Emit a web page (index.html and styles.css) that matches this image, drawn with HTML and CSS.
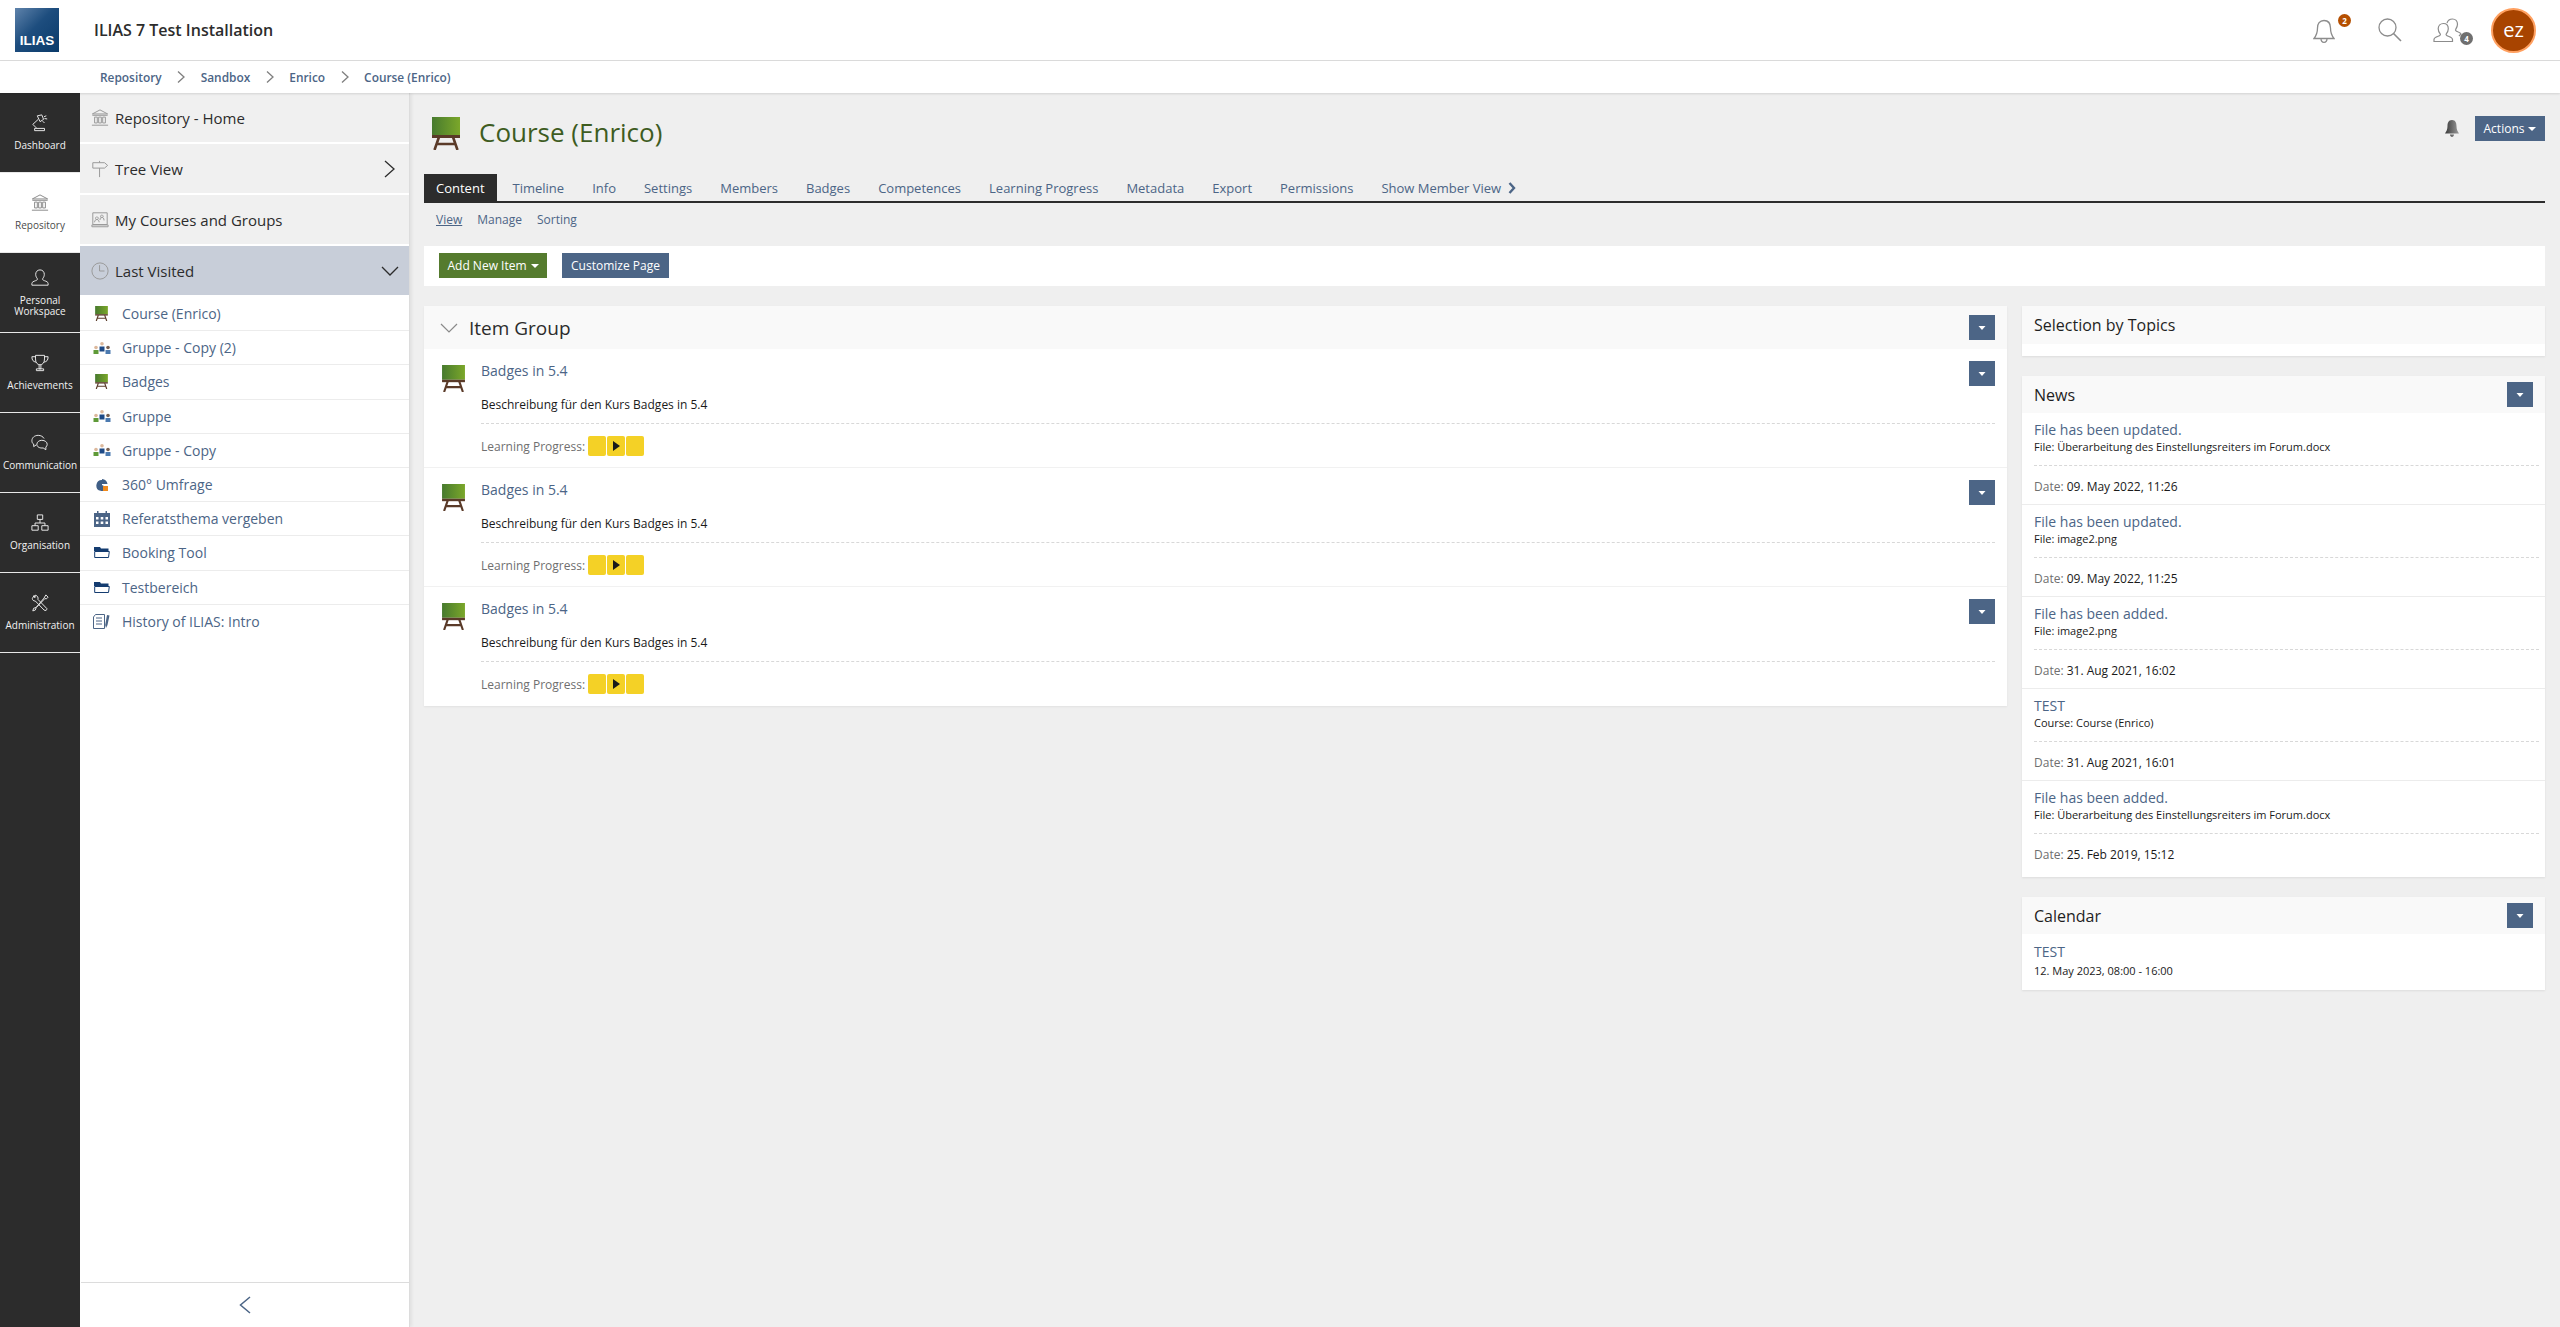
FILE: index.html
```html
<!DOCTYPE html>
<html lang="en">
<head>
<meta charset="utf-8">
<title>Course (Enrico)</title>
<link rel="stylesheet" href="styles.css">
</head>
<body>
<svg class="sprite" aria-hidden="true">
  <defs>
    <linearGradient id="board" x1="0" x2="1" y1="0" y2="0"><stop offset="0" stop-color="#477a2e"/><stop offset="1" stop-color="#7ba72a"/></linearGradient>
    <symbol id="i-course" viewBox="0 0 28 33">
      <rect x="0" y="0" width="28" height="18" fill="url(#board)"/>
      <rect x="0" y="18" width="28" height="3" fill="#5a3a28"/>
      <path d="M7 20 2.500 33M21 20l4.500 13M5 27h18" stroke="#5a3a28" stroke-width="2.600" fill="none"/>
    </symbol>
    <symbol id="i-group" viewBox="0 0 18 12">
      <circle cx="3" cy="5.500" r="1.800" fill="#dcb89c"/><rect x="0.500" y="8" width="5" height="4" fill="#5f9a38"/>
      <circle cx="9" cy="1.800" r="1.800" fill="#dcb89c"/><rect x="6.500" y="4.500" width="5" height="5" fill="#1e4a86"/>
      <circle cx="15" cy="5.500" r="1.800" fill="#7a6152"/><rect x="12.500" y="8" width="5" height="4" fill="#4c7ab0"/>
    </symbol>
    <symbol id="i-dd" viewBox="0 0 26 25"><rect width="26" height="25" fill="#4c6586"/><path d="M9.500 11h7l-3.500 4z" fill="#fff"/></symbol>
  </defs>
</svg>

<header class="topbar">
  <div class="logo"><span>ILIAS</span></div>
  <div class="inst-title">ILIAS 7 Test Installation</div>
  <div class="tools">
    <div class="tool tool-bell">
      <svg width="22" height="26" viewBox="0 0 22 26" fill="none" stroke="#8c8c8c" stroke-width="1.300"><path d="M11 1.500c-4.500 0-6.500 3.500-6.500 7.500 0 5-1.500 8-3.500 10.500h20c-2-2.500-3.500-5.500-3.500-10.500 0-4-2-7.500-6.500-7.500zM8 19.500c0 2.500 1.300 3.800 3 3.800s3-1.300 3-3.800"/></svg>
      <span class="badge badge-orange">2</span>
    </div>
    <div class="tool tool-search">
      <svg width="24" height="24" viewBox="0 0 24 24" fill="none" stroke="#8c8c8c" stroke-width="1.300"><circle cx="9.500" cy="9.500" r="8.500"/><path d="m15.500 15.500 7.500 7.500" stroke-width="1.600"/></svg>
    </div>
    <div class="tool tool-users">
      <svg width="30" height="25" viewBox="0 0 30 25" fill="none" stroke="#8c8c8c" stroke-width="1.200"><path d="M10.500 5.500c3 0 4.800 2.300 4.800 5.300 0 2.200-1 3.800-2 5-.7 1 .2 1.800 2 2.400 2 .7 4.200 1.600 4.200 3.300v2H1v-2c0-1.700 2.200-2.600 4.200-3.300 1.800-.6 2.700-1.400 2-2.400-1-1.200-2-2.800-2-5 0-3 2.300-5.300 5.300-5.300z"/><path d="M14 5c.8-2.600 3-4 5.500-4 3 0 5 2.300 5 5.300 0 2.200-1 3.800-1.800 5-.7 1 .2 1.800 2 2.400 1.400.5 3 1.300 3.300 2.300l-2 2"/></svg>
      <span class="badge badge-gray">4</span>
    </div>
    <div class="avatar">ez</div>
  </div>
</header>

<nav class="crumbs">
  <a>Repository</a><svg class="crumb-sep" viewBox="0 0 8 12"><path d="m1 .5 6 5.500-6 5.500" fill="none" stroke="#7f7f7f" stroke-width="1.300"/></svg>
  <a>Sandbox</a><svg class="crumb-sep" viewBox="0 0 8 12"><path d="m1 .5 6 5.500-6 5.500" fill="none" stroke="#7f7f7f" stroke-width="1.300"/></svg>
  <a>Enrico</a><svg class="crumb-sep" viewBox="0 0 8 12"><path d="m1 .5 6 5.500-6 5.500" fill="none" stroke="#7f7f7f" stroke-width="1.300"/></svg>
  <a>Course (Enrico)</a>
</nav>

<div class="workspace">
  <aside class="metabar">
    <div class="mb-item">
      <svg class="mb-icon" viewBox="0 0 20 20"><path d="M7 2l5-1 2 5-4 2.500zM8 6 2 11.500 6 15.500M4 16h11v2.500H4zM14.500 3l2.500-1M15 5l3 .5M13 8l2 2"/></svg>
      <span>Dashboard</span>
    </div>
    <div class="mb-item mb-active">
      <svg class="mb-icon" viewBox="0 0 20 20"><path d="M1.500 5.500 10 1l8.500 4.500zM1.500 7h17M4 9h3v6.500H4zM8.500 9h3v6.500h-3zM13 9h3v6.500h-3zM1 18h18"/></svg>
      <span>Repository</span>
    </div>
    <div class="mb-item">
      <svg class="mb-icon" viewBox="0 0 20 20"><path d="M10 1c3 0 4.800 2.300 4.800 5 0 2-.9 3.500-1.800 4.700-.6.900.2 1.700 2 2.300 2 .7 4 1.500 4 3v2H1v-2c0-1.500 2-2.300 4-3 1.800-.6 2.600-1.400 2-2.300C6.100 9.500 5.200 8 5.200 6c0-2.700 1.800-5 4.800-5z"/></svg>
      <span>Personal<br>Workspace</span>
    </div>
    <div class="mb-item">
      <svg class="mb-icon" viewBox="0 0 20 20"><path d="M5 1.500h10v4c0 4-2 6.500-5 6.500s-5-2.500-5-6.500zM5 3H1c0 4 1.500 5.500 4.500 6M15 3h4c0 4-1.500 5.500-4.500 6M9 12v4.500h2V12M6 18.500h8v-2H6z"/></svg>
      <span>Achievements</span>
    </div>
    <div class="mb-item">
      <svg class="mb-icon" viewBox="0 0 20 20"><path d="M3 11.500C1.500 10.300 1 9 1 7.500 1 4 4 1.500 8 1.500c3 0 5.500 1.500 6.500 3.500M3 11v3l3-2M12 7c3.500 0 6 2 6 4.500 0 1.300-.6 2.300-1.500 3v3l-3-2c-3.500.5-7-1-7-4C6.500 9 9 7 12 7z"/></svg>
      <span>Communication</span>
    </div>
    <div class="mb-item">
      <svg class="mb-icon" viewBox="0 0 20 20"><path d="M7 1h6v5H7zM10 6v4M4.500 13v-3h11v3M1 13h7v5H1zM12 13h7v5h-7z"/></svg>
      <span>Organisation</span>
    </div>
    <div class="mb-item">
      <svg class="mb-icon" viewBox="0 0 20 20"><path d="M3.500 1.500 1.500 5c0 1.800 1.300 2.800 3.300 2.800l9.700 10c1.200 1.200 3.500.3 3.200-1.500L7.700 6c.6-2-.4-4-2.700-4.700l-.8 2.900zM16.500 1l2.500 2.500-2 2-1.500-.5L5.800 15l-1 2.800-2.800 1 .9-2.900 2.900-1L14.500 4.500z"/></svg>
      <span>Administration</span>
    </div>
  </aside>

  <aside class="slate">
    <div class="slate-entry">
      <svg class="slate-icon" viewBox="0 0 20 20"><path d="M1.500 5.500 10 1l8.500 4.500zM1.500 7h17M4 9h3v6.500H4zM8.500 9h3v6.500h-3zM13 9h3v6.500h-3zM1 18h18"/></svg>
      <span>Repository - Home</span>
    </div>
    <div class="slate-entry">
      <svg class="slate-icon" viewBox="0 0 20 20"><path d="M2 3h13l3.500 3L15 9H2zM9.500 1v2M9.500 9v10"/></svg>
      <span>Tree View</span>
      <svg class="chev-right" viewBox="0 0 11 18"><path d="m1 1 9 8-9 8" fill="none" stroke="#2c2c2c" stroke-width="1.300"/></svg>
    </div>
    <div class="slate-entry">
      <svg class="slate-icon" viewBox="0 0 20 20"><path d="M2 2h16v13H2zM1 15.500h18v2H1zM6.500 6.500a1.500 1.500 0 1 0 .1 0M12 4.500a1.500 1.500 0 1 0 .1 0M4 12.500c0-2 1-3 2.500-3s2.500 1 2.500 3M10 10c0-2 .7-3 2-3s2.500 1 2.500 3.500"/></svg>
      <span>My Courses and Groups</span>
    </div>
    <div class="slate-entry slate-open">
      <svg class="slate-icon" viewBox="0 0 20 20"><circle cx="10" cy="10" r="9"/><path d="M9.500 3.500V10H15"/></svg>
      <span>Last Visited</span>
      <svg class="chev-down" viewBox="0 0 18 10"><path d="m1 1 8 8 8-8" fill="none" stroke="#2c2c2c" stroke-width="1.300"/></svg>
    </div>

    <ul class="visited">
      <li><span class="vi"><svg class="vi-course"><use href="#i-course"/></svg></span><a>Course (Enrico)</a></li>
      <li><span class="vi"><svg class="vi-group"><use href="#i-group"/></svg></span><a>Gruppe - Copy (2)</a></li>
      <li><span class="vi"><svg class="vi-course"><use href="#i-course"/></svg></span><a>Badges</a></li>
      <li><span class="vi"><svg class="vi-group"><use href="#i-group"/></svg></span><a>Gruppe</a></li>
      <li><span class="vi"><svg class="vi-group"><use href="#i-group"/></svg></span><a>Gruppe - Copy</a></li>
      <li><span class="vi"><svg class="vi-pie" viewBox="0 0 12 12"><path d="M6 1a5.500 5.500 0 1 0 5 7.500L6 6z" fill="#3f5e86"/><path d="M6 0a6 6 0 0 1 5.500 5H6z" fill="#3f5e86"/><rect x="7" y="7" width="5" height="5" fill="#f08a1d"/></svg></span><a>360° Umfrage</a></li>
      <li><span class="vi"><svg class="vi-cal" viewBox="0 0 16 16"><path d="M0 2h3V0h1.500v2h7V0H13v2h3v14H0z" fill="#4c6586"/><path d="M2 6h2.500v2.500H2zM6.700 6h2.600v2.500H6.700zM11.500 6H14v2.500h-2.500zM2 10.500h2.500V13H2zM6.700 10.500h2.600V13H6.700zM11.500 10.500H14V13h-2.500z" fill="#fff"/></svg></span><a>Referatsthema vergeben</a></li>
      <li><span class="vi"><svg class="vi-folder" viewBox="0 0 16 11"><path d="M0 0h6l1 1.500h7.500V4H0z" fill="#143c70"/><path d="M.7 4.500h14.600l-.8 6H.7z" fill="#fff" stroke="#143c70"/></svg></span><a>Booking Tool</a></li>
      <li><span class="vi"><svg class="vi-folder" viewBox="0 0 16 11"><path d="M0 0h6l1 1.500h7.500V4H0z" fill="#143c70"/><path d="M.7 4.500h14.600l-.8 6H.7z" fill="#fff" stroke="#143c70"/></svg></span><a>Testbereich</a></li>
      <li><span class="vi"><svg class="vi-doc" viewBox="0 0 17 15"><path d="M2.500.5h9v14H.5V3zM3 4h6M3 7h6M3 10h6" fill="#fff" stroke="#4c6586"/><path d="m14 1 2.500.5-2 9.500-1.500 3-.8-3z" fill="#4c6586"/></svg></span><a>History of ILIAS: Intro</a></li>
    </ul>

    <div class="slate-foot">
      <svg class="chev-left" viewBox="0 0 12 18"><path d="M11 1 1.500 9l9.500 8" fill="none" stroke="#4c6586" stroke-width="1.500"/></svg>
    </div>
  </aside>

  <main class="content">
    <div class="head">
      <svg class="head-icon"><use href="#i-course"/></svg>
      <h1>Course (Enrico)</h1>
      <div class="head-actions">
        <svg class="head-bell" viewBox="0 0 14 17"><defs><linearGradient id="bellg"><stop offset="0" stop-color="#3a3a3a"/><stop offset="1" stop-color="#9a9a9a"/></linearGradient></defs><path d="M7 0c-3.500 0-4.500 3-4.500 6 0 3.500-1 5-2.500 7.500h14C12.500 11 11.500 9.500 11.500 6c0-3-1-6-4.500-6zM5 14.500c0 1.500 1 2.500 2 2.500s2-1 2-2.500z" fill="url(#bellg)"/></svg>
        <button class="btn btn-blue btn-actions">Actions<i class="caret"></i></button>
      </div>
    </div>

    <ul class="tabs">
      <li class="tab-active">Content</li>
      <li>Timeline</li>
      <li>Info</li>
      <li>Settings</li>
      <li>Members</li>
      <li>Badges</li>
      <li>Competences</li>
      <li>Learning Progress</li>
      <li>Metadata</li>
      <li>Export</li>
      <li>Permissions</li>
      <li>Show Member View<svg class="tab-chev" viewBox="0 0 8 12"><path d="m1.500 1 4.500 5-4.500 5" fill="none" stroke="#4c6586" stroke-width="2.400"/></svg></li>
    </ul>

    <ul class="subtabs">
      <li class="sub-active">View</li>
      <li>Manage</li>
      <li>Sorting</li>
    </ul>

    <div class="toolbar">
      <button class="btn btn-green">Add New Item<i class="caret"></i></button>
      <button class="btn btn-blue">Customize Page</button>
    </div>

    <div class="columns">
      <section class="group">
        <div class="group-head">
          <svg class="group-chev" viewBox="0 0 18 10"><path d="m1 1 8 8 8-8" fill="none" stroke="#8a8a8a" stroke-width="1.200"/></svg>
          <h2>Item Group</h2>
          <svg class="dd"><use href="#i-dd"/></svg>
        </div>

        <article class="item">
          <svg class="item-icon"><use href="#i-course"/></svg>
          <div class="item-body">
            <a class="item-title">Badges in 5.4</a>
            <p class="item-desc">Beschreibung für den Kurs Badges in 5.4</p>
            <div class="item-prop">Learning Progress:<span class="lp"><i></i><i class="lp-play"></i><i></i></span></div>
          </div>
          <svg class="dd dd-over"><use href="#i-dd"/></svg>
        </article>
        <article class="item">
          <svg class="item-icon"><use href="#i-course"/></svg>
          <div class="item-body">
            <a class="item-title">Badges in 5.4</a>
            <p class="item-desc">Beschreibung für den Kurs Badges in 5.4</p>
            <div class="item-prop">Learning Progress:<span class="lp"><i></i><i class="lp-play"></i><i></i></span></div>
          </div>
          <svg class="dd dd-over"><use href="#i-dd"/></svg>
        </article>
        <article class="item item-last">
          <svg class="item-icon"><use href="#i-course"/></svg>
          <div class="item-body">
            <a class="item-title">Badges in 5.4</a>
            <p class="item-desc">Beschreibung für den Kurs Badges in 5.4</p>
            <div class="item-prop">Learning Progress:<span class="lp"><i></i><i class="lp-play"></i><i></i></span></div>
          </div>
          <svg class="dd dd-over"><use href="#i-dd"/></svg>
        </article>
      </section>

      <div class="side">
        <section class="panel">
          <div class="panel-head panel-head-tall"><h3>Selection by Topics</h3></div>
          <div class="panel-empty"></div>
        </section>

        <section class="panel">
          <div class="panel-head"><h3>News</h3><svg class="dd"><use href="#i-dd"/></svg></div>
          <div class="news">
            <a class="news-title">File has been updated.</a>
            <div class="news-file">File: Überarbeitung des Einstellungsreiters im Forum.docx</div>
            <div class="news-date"><span>Date:</span> 09. May 2022, 11:26</div>
          </div>
          <div class="news">
            <a class="news-title">File has been updated.</a>
            <div class="news-file">File: image2.png</div>
            <div class="news-date"><span>Date:</span> 09. May 2022, 11:25</div>
          </div>
          <div class="news">
            <a class="news-title">File has been added.</a>
            <div class="news-file">File: image2.png</div>
            <div class="news-date"><span>Date:</span> 31. Aug 2021, 16:02</div>
          </div>
          <div class="news">
            <a class="news-title">TEST</a>
            <div class="news-file">Course: Course (Enrico)</div>
            <div class="news-date"><span>Date:</span> 31. Aug 2021, 16:01</div>
          </div>
          <div class="news news-last">
            <a class="news-title">File has been added.</a>
            <div class="news-file">File: Überarbeitung des Einstellungsreiters im Forum.docx</div>
            <div class="news-date"><span>Date:</span> 25. Feb 2019, 15:12</div>
          </div>
        </section>

        <section class="panel">
          <div class="panel-head"><h3>Calendar</h3><svg class="dd"><use href="#i-dd"/></svg></div>
          <div class="cal">
            <a class="news-title cal-title">TEST</a>
            <div class="cal-date">12. May 2023, 08:00 - 16:00</div>
          </div>
        </section>
      </div>
    </div>
  </main>
</div>
</body>
</html>
```

FILE: styles.css
```css
* { box-sizing: border-box; }
html, body { height: 100%; }
body {
  margin: 0;
  height: 100vh;
  overflow: hidden;
  display: flex;
  flex-direction: column;
  font-family: "Open Sans", "Noto Sans", sans-serif;
  color: #1a1a1a;
  background: #efefef;
}
ul { list-style: none; margin: 0; padding: 0; }
h1, h2, h3, p { margin: 0; font-weight: 400; }
.sprite { display: block; width: 0; height: 0; overflow: hidden; }

/* top bar */
.topbar {
  height: 61px;
  flex: none;
  display: flex;
  align-items: center;
  padding-left: 15px;
  background: #fff;
  border-bottom: 1px solid #dcdcdc;
}
.logo {
  width: 44px;
  height: 44px;
  display: flex;
  align-items: flex-end;
  justify-content: center;
  padding-bottom: 3px;
  background: linear-gradient(135deg, #5f83ab 0%, #1d4d7e 45%, #0a3a6a 100%);
  color: #fff;
  font: 700 13.500px/16px "Liberation Sans", sans-serif;
}
.inst-title {
  margin-left: 35px;
  font-size: 16px;
  font-weight: 600;
  color: #2c2c2c;
}
.tools { margin-left: auto; display: flex; align-items: center; }
.tool { position: relative; display: flex; }
.tool-bell { margin-right: 43px; padding-top: 3px; }
.tool-search { margin-right: 31px; }
.tool-users { padding-top: 1px; }
.badge {
  position: absolute;
  width: 13px;
  height: 13px;
  border-radius: 50%;
  color: #fff;
  font-size: 8px;
  font-weight: 700;
  line-height: 13px;
  text-align: center;
}
.badge-orange { background: #b54f00; left: 25px; top: -2px; }
.badge-gray { background: #6f6f6f; left: 27px; top: 15px; }
.avatar {
  width: 45px;
  height: 45px;
  margin: 0 24px 0 28px;
  border-radius: 50%;
  background: #a84400;
  border: 2px solid #ffa060;
  color: #fff;
  font-size: 20px;
  line-height: 39px;
  text-align: center;
}

/* breadcrumbs */
.crumbs {
  height: 32px;
  flex: none;
  display: flex;
  align-items: center;
  padding-left: 100px;
  background: #fff;
  font-size: 11.900px;
  font-weight: 600;
  color: #4c6586;
  box-shadow: 0 1px 2px rgba(0, 0, 0, .12);
  position: relative;
  z-index: 2;
}
.crumb-sep { width: 8px; height: 12px; margin: 0 15.500px; }

/* main area */
.workspace { flex: 1; min-height: 0; display: flex; }

.metabar { width: 80px; flex: none; background: #2c2c2c; }
.mb-item {
  height: 80px;
  display: flex;
  flex-direction: column;
  align-items: center;
  justify-content: center;
  gap: 8px;
  border-bottom: 1px solid #e8e8e8;
  color: #f2f2f2;
  font-size: 10px;
  line-height: 11px;
  text-align: center;
}
.mb-icon { width: 18px; height: 18px; fill: none; stroke: #e6e6e6; stroke-width: 1.100; }
.mb-active { background: #fff; color: #4a4a4a; }
.mb-active .mb-icon { stroke: #8c8c8c; }

.slate {
  width: 330px;
  flex: none;
  display: flex;
  flex-direction: column;
  background: #fff;
  border-right: 1px solid #dcdcdc;
  box-shadow: 2px 0 3px rgba(0, 0, 0, .06);
  position: relative;
  z-index: 1;
}
.slate-entry {
  height: 49px;
  flex: none;
  margin-bottom: 2px;
  display: flex;
  align-items: center;
  gap: 6px;
  padding: 0 10px 0 11px;
  background: #f0f0f0;
  font-size: 15px;
  color: #2c2c2c;
}
.slate-open { margin-bottom: 0; background: #c8ced9; }
.slate-icon { width: 18px; height: 18px; fill: none; stroke: #9a9a9a; stroke-width: 1.100; }
.chev-right { width: 11px; height: 18px; margin-left: auto; margin-right: 4px; }
.chev-down { width: 18px; height: 10px; margin-left: auto; }

.visited { flex: 1; padding-top: 2px; }
.visited li {
  height: 34.200px;
  display: flex;
  align-items: center;
  padding-left: 12px;
  border-bottom: 1px solid #ececec;
  font-size: 14px;
  color: #4c6586;
}
.visited li:last-child { border-bottom: 0; }
.vi { width: 19px; margin-right: 11px; display: flex; justify-content: center; }
.vi-course { width: 13px; height: 15px; }
.vi-group { width: 18px; height: 12px; }
.vi-pie { width: 12px; height: 12px; }
.vi-cal { width: 16px; height: 16px; }
.vi-folder { width: 16px; height: 11px; }
.vi-doc { width: 17px; height: 15px; }

.slate-foot {
  height: 45px;
  flex: none;
  display: flex;
  justify-content: center;
  padding-top: 13px;
  margin-left: 1px;
  border-top: 1px solid #dcdcdc;
}
.chev-left { width: 12px; height: 18px; }

/* content */
.content { flex: 1; min-width: 0; padding: 0 15px 0 14px; }
.head { height: 81px; display: flex; align-items: flex-start; padding: 24px 0 0 8px; }
.head-icon { width: 28px; height: 33px; flex: none; }
h1 { margin-left: 19px; font-size: 26px; line-height: 30px; color: #3e5c1f; }
.head-actions { margin: -1px 0 0 auto; display: flex; align-items: center; gap: 16px; }
.head-bell { width: 14px; height: 17px; }

.btn {
  height: 25px;
  border: 0;
  padding: 0;
  color: #fff;
  font: 400 12px/25px "Open Sans", sans-serif;
}
.btn-blue { background: #4c6586; width: 107px; }
.btn-green { background: #557b2e; width: 108px; }
.btn-actions { width: 70px; }
.caret {
  display: inline-block;
  margin-left: 4px;
  vertical-align: 2px;
  border-top: 4px solid #fff;
  border-left: 4px solid transparent;
  border-right: 4px solid transparent;
}

.tabs {
  height: 29px;
  display: flex;
  gap: 4px;
  border-bottom: 2px solid #2c2c2c;
  font-size: 13px;
  line-height: 25px;
  color: #4c6586;
}
.tabs li { padding: 2px 12px 0; white-space: nowrap; }
.tab-active { background: #2c2c2c; color: #fff; }
.tab-chev { width: 8px; height: 12px; margin-left: 7px; vertical-align: -1px; }

.subtabs {
  height: 43px;
  display: flex;
  gap: 15px;
  padding: 8px 0 0 12px;
  font-size: 12px;
  line-height: 18px;
  color: #4c6586;
}
.sub-active { text-decoration: underline; }

.toolbar {
  height: 40px;
  display: flex;
  gap: 15px;
  padding: 7px 15px;
  background: #fff;
}
.columns { display: flex; align-items: flex-start; gap: 15px; margin-top: 20px; }

.dd { width: 26px; height: 25px; flex: none; }

.group { flex: 1; min-width: 0; background: #fff; box-shadow: 0 1px 2px rgba(0, 0, 0, .06); }
.group-head {
  height: 43px;
  display: flex;
  align-items: center;
  padding: 0 12px 0 16px;
  background: #f9f9f9;
}
.group-chev { width: 18px; height: 10px; }
h2 { margin-left: 11px; font-size: 19px; color: #2c2c2c; }
.group-head .dd { margin-left: auto; }

.item {
  position: relative;
  height: 119px;
  display: flex;
  align-items: flex-start;
  padding: 12px 12px 0 18px;
  border-bottom: 1px solid #f1f1f1;
}
.item-last { border-bottom: 0; }
.item-icon { width: 23px; height: 27px; flex: none; margin: 4px 16px 0 0; }
.item-body { flex: 1; }
.dd-over { position: absolute; right: 12px; top: 12px; }
.item-title { display: block; font-size: 14px; line-height: 20px; color: #4c6586; }
.item-desc {
  margin-top: 14px;
  padding-bottom: 8px;
  border-bottom: 1px dashed #d8d8d8;
  font-size: 12px;
  line-height: 20px;
  color: #1a1a1a;
}
.item-prop {
  display: flex;
  align-items: center;
  height: 20px;
  margin-top: 12px;
  font-size: 12px;
  color: #6f6f6f;
}
.lp { display: flex; gap: 1px; margin-left: 3px; }
.lp i { width: 18px; height: 20px; border-radius: 2px; background: #f4d126; display: block; }
.lp-play { display: flex !important; align-items: center; justify-content: center; }
.lp-play::before {
  content: "";
  border-left: 7px solid #1a1a1a;
  border-top: 5px solid transparent;
  border-bottom: 5px solid transparent;
}

.side { width: 523px; flex: none; display: flex; flex-direction: column; gap: 20px; }
.panel { background: #fff; box-shadow: 0 1px 2px rgba(0, 0, 0, .08); }
.panel-head {
  height: 37px;
  display: flex;
  align-items: center;
  justify-content: space-between;
  padding: 0 12px;
  background: #f9f9f9;
}
.panel-head-tall { height: 38px; }
h3 { font-size: 16px; color: #1f1f1f; }
.panel-empty { height: 12px; }

.news { height: 92px; padding: 7px 6px 0 12px; border-bottom: 1px solid #ececec; }
.news-last { height: 96px; border-bottom: 0; }
.news-title { display: block; font-size: 14px; line-height: 19px; color: #4c6586; }
.news-file {
  padding-bottom: 10px;
  border-bottom: 1px dashed #d8d8d8;
  font-size: 11px;
  line-height: 16px;
}
.news-date { padding-top: 11px; font-size: 12px; line-height: 20px; }
.news-date span { color: #6f6f6f; }

.cal { height: 56px; padding: 8px 12px 0; }
.cal-title { line-height: 20px; }
.cal-date { margin-top: 1px; font-size: 11px; line-height: 16px; }
```
